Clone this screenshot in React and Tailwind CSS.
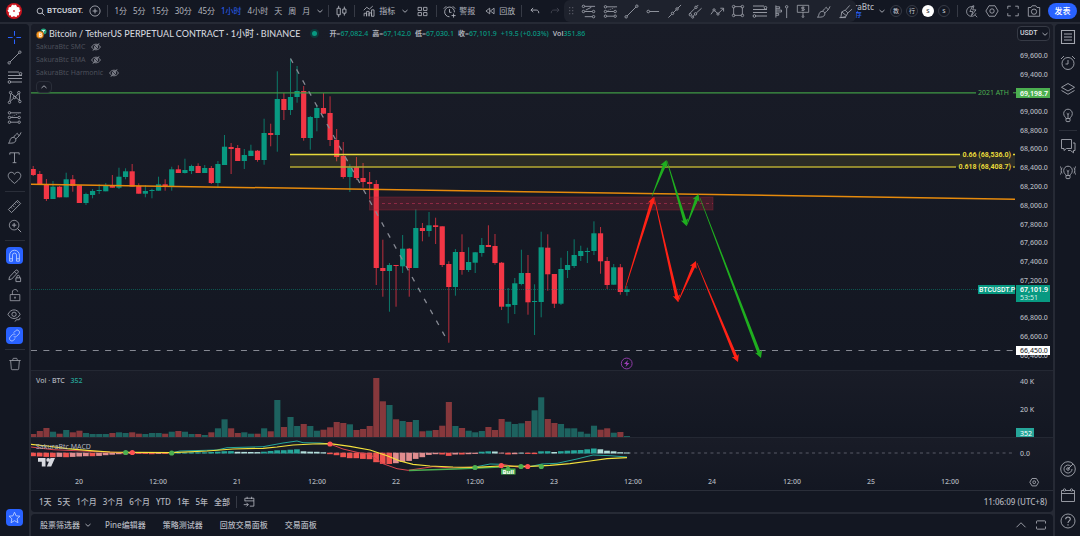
import React, { useState } from 'react';

const UP = '#089981';
const DOWN = '#f23645';

// [direction, bodyTop, bodyBottom, high, low, volume]
const CANDLES = [
  [0, 169, 175, 166, 176, 3], [0, 174, 184.3, 171, 184.3, 6], [0, 184.3, 199, 179, 201, 9], [1, 186.7, 199, 181, 199, 5.3],
  [0, 186.7, 197.3, 186, 197.3, 3.3], [1, 179.3, 197.3, 172.7, 197.3, 7], [0, 179.3, 186, 175, 191.7, 4.7], [0, 185.3, 203, 185.3, 203, 6.3],
  [1, 194, 203, 192.7, 205, 4], [1, 191, 195, 189, 198.3, 3], [1, 190, 191, 184.3, 194, 3], [1, 185.7, 191.3, 183, 191.3, 3],
  [0, 185.7, 187.7, 175, 187.7, 4], [1, 176.7, 187.7, 167.7, 189, 4.7], [1, 171.3, 177, 168.3, 179.3, 4], [0, 171.3, 186.7, 164, 186.7, 4.7],
  [0, 186, 193.7, 183.3, 193.7, 3.3], [1, 191, 193.7, 185, 197.3, 3], [1, 190, 191, 188.7, 198.3, 4], [1, 184.3, 190.7, 176.7, 190.7, 4],
  [0, 184.3, 186.7, 179.3, 190.7, 3.3], [1, 169.3, 186.7, 166.7, 190.7, 5.3], [0, 169.3, 173, 165.3, 173, 6], [1, 170, 173, 158.7, 173.5, 5.3],
  [1, 166, 171, 164.7, 174, 3], [0, 166, 173, 163.3, 173, 3], [1, 168, 173, 165, 173, 2], [0, 168, 183, 166, 184, 4.7],
  [1, 164, 183, 161, 188, 8.7], [1, 146.7, 165, 135, 165, 17.7], [0, 147, 149, 143, 174, 8.7], [0, 148, 161, 145, 161, 4],
  [1, 155, 161, 149, 169, 4.7], [1, 150.7, 156, 144.7, 156, 3.3], [0, 150.7, 160, 150, 161.7, 3.3], [1, 133, 160, 118.7, 164.7, 8.7],
  [0, 133, 135, 123.7, 146.3, 5.7], [1, 99, 135, 71.3, 151.7, 37], [0, 99, 110, 93, 120, 10], [1, 97, 110, 58.7, 115, 20],
  [1, 91, 97, 66, 102.7, 11], [0, 91, 138, 86, 140.7, 13], [1, 117, 138, 116, 149.7, 11], [1, 108, 118, 105, 131.3, 6.3],
  [0, 108, 113.7, 93, 114, 7.3], [0, 113, 140, 96.3, 146, 9.7], [0, 140, 157, 129, 161.3, 15], [0, 156, 177, 142, 178.7, 14],
  [1, 167.7, 177, 164.3, 192, 12.7], [0, 167.3, 178, 157, 180, 7], [0, 178, 182, 163, 187.7, 8], [0, 182, 184, 172, 199, 11],
  [0, 184, 268, 180, 285, 59], [0, 268, 271, 239.7, 296.7, 35.7], [1, 265, 271, 263, 311.7, 32], [0, 265, 266, 265, 306.7, 17.7],
  [1, 248.7, 266.3, 235, 273, 16], [0, 248.7, 268, 248, 296.7, 15], [1, 228, 268, 209.3, 268, 17], [0, 228, 231, 223, 241.3, 5.7],
  [1, 225.3, 231, 212, 236.7, 6.3], [0, 225.3, 227, 217.7, 244, 7], [0, 226.3, 265, 226.3, 267, 11.3], [0, 264, 287, 261.3, 342.7, 35],
  [1, 252, 287, 249, 295.7, 11], [0, 252, 270, 234.3, 274.7, 9], [1, 262, 270, 247.3, 272, 6.3], [1, 252.3, 262.7, 252, 273, 4.7],
  [1, 245, 253, 238, 256.7, 6], [0, 245, 247, 225.3, 247, 10], [0, 246, 263, 234, 264.7, 7], [0, 262.7, 306.7, 262, 310, 18],
  [1, 304, 306.7, 288, 323.3, 15.3], [1, 283.3, 305, 278, 314, 13], [1, 273, 284, 249.7, 285.3, 13.7], [0, 273, 302.3, 255, 314.7, 16],
  [1, 301, 302, 284.3, 335, 26.7], [1, 247.3, 302, 231.7, 317.3, 39.7], [0, 247.7, 274.3, 234.3, 290.7, 18], [0, 274, 303.7, 274, 308, 14],
  [1, 269, 303.7, 257.7, 305, 13], [1, 265, 270, 251, 278, 8.7], [1, 255, 266, 239.3, 268, 8.7], [1, 251, 256, 245.7, 261, 5.3],
  [1, 251, 252, 247.7, 263, 3.3], [1, 233.3, 251, 221.3, 255, 11.3], [0, 233.3, 261.3, 227, 273.7, 7.3], [0, 261, 285, 257, 289, 8.7],
  [1, 267.3, 284.7, 264, 284.7, 4.3], [0, 267.3, 292, 264, 294.7, 5], [1, 289.3, 292, 286, 295.7, 1],
];

// MACD histogram heights, positive values go up
const HIST = [
  -3, -3.3, -3.7, -4, -3.7, -4, -3.7, -3.3, -3, -3, -2.7, -2, -1.5, -1, -1, -0.7, -0.7, -0.7, -1, -0.7, -0.7, -0.3, 0.5, 0.6, 0.7,
  0.7, 0.7, 1, 1.3, 1.8, 1.9, 1.2, 1.1, 1, 0.9, 1.3, 2, 2.7, 2.8, 3.3, 3.7, 1.7, 1.3, 1.2, 0.7, -1, -2, -4, -5, -5, -5.7, -6, -9,
  -10.7, -10.8, -10, -8.7, -7.7, -5.7, -4, -1.7, -1, -1.3, -2.7, -1.3, -1.3, -1, -0.7, 1.3, 1.7, 1.5, -0.3, -1.3, -1, 0.3, -0.7,
  -0.9, 1.7, 1.8, 1, 1.8, 2.3, 2.7, 3, 3.7, 4.5, 3.7, 2.3, 1.7, 0.8, 0.5,
];

const PRICE_TICKS = [
  ['69,600.0', 55], ['69,400.0', 74], ['69,000.0', 111], ['68,800.0', 130], ['68,600.0', 148], ['68,400.0', 167], ['68,200.0', 186],
  ['68,000.0', 205], ['67,800.0', 224], ['67,600.0', 242], ['67,400.0', 261], ['67,200.0', 280], ['66,800.0', 317], ['66,600.0', 336],
  ['66,400.0', 355], ['40 K', 381], ['20 K', 409], ['0.0', 453],
];

const TIME_TICKS = [
  ['20', 79], ['12:00', 158], ['21', 237], ['12:00', 317], ['22', 396], ['12:00', 475], ['23', 554], ['12:00', 633], ['24', 712],
  ['12:00', 792], ['25', 871], ['12:00', 950],
];

const DOTS = [
  [125.7, 452.5, 1], [132.3, 452.5, 0], [171.7, 453, 1], [330, 444, 0], [475, 467.5, 1], [501.3, 465.5, 0], [521, 466.5, 1],
  [527.7, 466.5, 0], [541.3, 466.5, 1],
];

const ARROWS = [
  [625, 289, 653.5, 197, '#ff2216'], [654, 197, 678, 302, '#ff2216'], [678, 302, 696, 261, '#ff2216'], [697, 263, 738, 362, '#ff2216'],
  [652, 196, 666.5, 160, '#1fae1f'], [667, 161, 686.5, 226, '#1fae1f'], [686.5, 226, 698.5, 194, '#1fae1f'], [700, 198, 761, 358, '#1fae1f'],
];

const INTERVALS = ['1分', '5分', '15分', '30分', '45分', '1小时', '4小时', '天', '周', '月'];
const RANGES = ['1天', '5天', '1个月', '3个月', '6个月', 'YTD', '1年', '5年', '全部'];

const xAt = (i) => 33.2 + i * 6.597;

const Icon = ({ size = 16, className = '', children }) => (
  <svg width={size} height={size} viewBox="0 0 16 16" fill="none" stroke="currentColor" strokeWidth="0.9" className={`shrink-0 ${className}`}>
    {children}
  </svg>
);

const FibIcon = (p) => (
  <Icon {...p}>
    <path d="M1 3h11M1 6.5h14M1 9.5h14M4 13h11" />
    <circle cx="13.5" cy="4.7" r="1.3" fill="#131722" />
    <circle cx="2.4" cy="13" r="1.3" fill="#131722" />
  </Icon>
);
const FibToolIcon = (p) => (
  <Icon {...p}>
    <path d="M4 2.5h11M4 8h8M4 13.5h8M5 6.5l6-3" />
    <circle cx="2.6" cy="2.5" r="1.3" /><circle cx="2.6" cy="8" r="1.3" /><circle cx="13.4" cy="8" r="1.3" /><circle cx="13.4" cy="13.5" r="1.3" />
  </Icon>
);
const ForecastIcon = (p) => (
  <Icon {...p}>
    <path d="M4 3h11M4 8h7.5M4 13h7.5" /><path d="M5 7l7-3" strokeDasharray="1 1.4" />
    <circle cx="2.6" cy="3" r="1.3" /><circle cx="2.6" cy="13" r="1.3" /><circle cx="2.6" cy="8" r="1.3" /><circle cx="13" cy="8" r="1.3" /><circle cx="13" cy="13" r="1.3" />
  </Icon>
);
const TrendIcon = (p) => (
  <Icon {...p}><path d="M3.2 12.8l9.6-9.6" /><circle cx="2.3" cy="13.7" r="1.3" /><circle cx="13.7" cy="2.3" r="1.3" /></Icon>
);
const BrushIcon = (p) => (
  <Icon {...p}><path d="M1.5 14c2-.5 1-3.300 2.700-5.100 1.500-1.500 3.700-1.200 4.600-.2 1 1.200.9 3-.5 4.200C6.600 14.300 4 14 1.500 14zM7 7.800c1.300-2 2.800-3.400 4-4.300M9.300 9.500c2.700-1.800 4.700-4.200 5.700-7M11 3.500c.3 1.300 1 2 2.200 2" /></Icon>
);
const GearHex = (p) => (
  <Icon {...p}><path d="M4.600 2h6.800L15 8l-3.600 6H4.600L1 8z" /><circle cx="8" cy="8" r="2.500" /></Icon>
);
const FullIcon = (p) => (
  <Icon {...p}><path d="M2 5.500V2.500h3.500M10.500 2.500H14v3M14 10.500v3h-3.500M5.500 13.500H2v-3" /></Icon>
);
const MaximizeIcon = (p) => (
  <Icon {...p}><path d="M2 6V3.500q0-1 1-1h10q1 0 1 1V6M2 10v2.500q0 1 1 1h10q1 0 1-1V10" strokeWidth="1.100" /></Icon>
);
const Chevron = ({ up }) => (
  <Icon size={8}>{up ? <path d="M3 10l5-4.500 5 4.500" strokeWidth="1.800" /> : <path d="M3 6l5 4.500L13 6" strokeWidth="1.800" />}</Icon>
);
const BulbShape = () => (
  <path d="M6 11.500c0-1.200-2.300-2-2.300-5a4.300 4.300 0 018.600 0c0 3-2.300 3.800-2.300 5zM6 11.500v2.200c0 .6.400.9 1 .9h2c.6 0 1-.3 1-.9v-2.200M8 11V7M6.700 6.200L8 7.400l1.300-1.200" />
);
const HiddenEye = () => (
  <Icon size={10} className="text-[#9598a1]">
    <path d="M1 8c1.500-3 4-4.500 7-4.500S13.500 5 15 8c-1.500 3-4 4.500-7 4.500S2.500 11 1 8zM3 14L13 2" strokeWidth="1.300" /><circle cx="8" cy="8" r="2.500" strokeWidth="1.300" />
  </Icon>
);

const DRAW_GROUPS = [
  [
    ['十字线', <Icon size={15} className="text-[#2962ff]"><path d="M8 1v5M8 10v5M1 8h5M10 8h5" strokeWidth="1.100" /></Icon>],
    ['趋势线', <TrendIcon size={15} />],
    ['斐波那契', <FibIcon size={16} />],
    ['形态', <Icon size={15}><path d="M3 12L4 4M5 4l8 7M3.500 12L7 8.800M9 7.300L12 4M13 4l.5 7" /><circle cx="2.600" cy="13.200" r="1.300" /><circle cx="3.800" cy="2.800" r="1.300" /><circle cx="8" cy="8" r="1.300" /><circle cx="12.600" cy="2.800" r="1.300" /><circle cx="13.700" cy="12.300" r="1.300" /></Icon>],
    ['预测', <ForecastIcon size={15} />],
    ['画笔', <BrushIcon size={15} />],
    ['文字', <Icon size={15}><path d="M3 5V3h10v2M8 3v10.500M6 13.500h4" /></Icon>],
    ['图标', <Icon size={15}><path d="M8 14.300C4 11 1.300 8.800 1.300 5.900c0-2 1.500-3.500 3.300-3.500C6 2.400 7.300 3.200 8 4.700c.7-1.500 2-2.300 3.400-2.300 1.800 0 3.300 1.500 3.300 3.500 0 2.900-2.700 5.100-6.700 8.400z" /></Icon>],
  ],
  [
    ['测量', <Icon size={15}><path d="M1.500 11.200l9.700-9.700 3.300 3.300-9.700 9.700zM4 8.700l1.400 1.400M6 6.700l2 2M8 4.700l1.400 1.400M10 2.700l2 2" /></Icon>],
    ['放大', <Icon size={14}><circle cx="7" cy="7" r="5.500" /><path d="M11 11l4 4M7 4.500v5M4.500 7h5" strokeWidth="1.100" /></Icon>],
  ],
  [
    ['磁铁模式', <Icon size={13}><path d="M2 15V7.500a6 6 0 0112 0V15h-3.500V7.500a2.500 2.500 0 00-5 0V15zM2 12h3.500M10.500 12H14" strokeWidth="1.100" /></Icon>, true],
    ['保持绘图', <Icon size={15}><path d="M2 12.500l.7-3L9.500 2.300c1-1 3.300 1 2.300 2.300L5 11.800zM8 4l2.300 2.300M9.500 10.500h5v4h-5zM10.500 10.500V9.300c0-2 3-2 3 0v1.200" /></Icon>],
    ['锁定', <Icon size={14}><path d="M2.500 7.500h11v7h-11zM5 7.500V4.700C5 .8 11 .8 11 4.200" /><path d="M8 10v2" strokeWidth="1.500" /></Icon>],
    ['隐藏', <Icon size={15}><path d="M1 6.700c1.500-3 4-4.700 6.500-4.700S12.500 3.700 14 6.700c-1.500 3-4 4.500-6.500 4.500S2.500 9.700 1 6.700zM8.500 14.500l1.500-2h3l1-2" /><circle cx="7.500" cy="6.700" r="2.300" /></Icon>],
    ['同步', <Icon size={13}><path d="M7 4.500l2.300-2.300c1.300-1.300 3-1.100 4 0s1.300 2.700 0 4L10.500 9c-1 1-2.500 1-3.500.2M9 11.500l-2.300 2.300c-1.300 1.300-3 1.100-4 0s-1.300-2.700 0-4L5.500 7C6.500 6 8 6 9 6.800" strokeWidth="1.100" /></Icon>, true],
  ],
  [['删除', <Icon size={14}><path d="M1.500 4h13M5.500 4V2.500c0-.600.4-1 1-1h3c.6 0 1 .4 1 1V4M3 4l.8 9.500c0 .6.400 1 1 1h6.400c.6 0 1-.4 1-1L13 4" /></Icon>]],
];

const FAVORITES = [
  <FibToolIcon size={15} />,
  <ForecastIcon size={15} />,
  <TrendIcon size={15} />,
  <Icon size={15}><circle cx="3.500" cy="8" r="1.400" /><path d="M5 8h10" /></Icon>,
  <Icon size={15}><path d="M1.500 14.500L5 11M6.800 9.200l3-3M11.600 4.400L15 1" /><circle cx="5.900" cy="10" r="1.300" /><circle cx="10.700" cy="5.300" r="1.300" /></Icon>,
  <Icon size={15}><path d="M1.500 10.500l6-6M9.500 2.500L11 1M5.500 13l1.500-1.500M9 9.500l5.500-5" /><circle cx="8.500" cy="3.500" r="1.300" /><circle cx="2.500" cy="11.500" r="1.300" /><circle cx="8" cy="10.500" r="1.300" /><circle cx="5" cy="14" r="1.100" /></Icon>,
  <Icon size={15}><path d="M1 11l2.500-3.500M5 7l3 3M9 10l5-5M11 4.500h3.500V8" /><circle cx="4.300" cy="6.300" r="1.200" /><circle cx="8.500" cy="10.700" r="1.200" /></Icon>,
  <Icon size={14}><path d="M3 4v8M13 4v8M4 3h8M4 13h8" /><circle cx="3" cy="3" r="1.500" /><circle cx="13" cy="3" r="1.500" /><circle cx="3" cy="13" r="1.500" /><circle cx="13" cy="13" r="1.500" /></Icon>,
  <FibIcon size={16} />,
  <Icon size={15}><path d="M2 1.500v13M2 3h4v2H2M2 6.500h6v2H2M2 10h3v2H2M13.500 4.500V15" /><circle cx="13.500" cy="3" r="1.300" /></Icon>,
  <Icon size={14}><path d="M1.500 1.500h13v8h-13zM8 9.500v4M9.700 3.700H7.200c-1.300 0-1.300 1.700 0 1.700h1.600c1.300 0 1.300 1.800 0 1.800H6.300M8 2.800v5.400" /><circle cx="8" cy="14.400" r="1" /></Icon>,
  <BrushIcon size={15} />,
  <Icon size={15}><path d="M1.500 14.500h7M3 14.500l1-6 3.500-2 3 3-2.300 4zM8 6.500l4.500-5M10.500 9.500l4.500-4M4 8.500l5 4" /></Icon>,
];

const Arrow = ({ x1, y1, x2, y2, color }) => {
  const len = Math.hypot(x2 - x1, y2 - y1);
  const ux = (x2 - x1) / len;
  const uy = (y2 - y1) / len;
  const pt = (along, side) => `${(x1 + ux * along - uy * side).toFixed(2)},${(y1 + uy * along + ux * side).toFixed(2)}`;
  const neck = len - 6;
  return (
    <polygon
      fill={color}
      points={[pt(0, 0.3), pt(neck, 1.6), pt(neck - 1, 3.8), pt(len, 0), pt(neck - 1, -3.8), pt(neck, -1.6), pt(0, -0.3)].join(' ')}
    />
  );
};

const Chart = () => (
  <svg viewBox="31 24 1022 466" className="block w-full h-auto" fontFamily='"Noto Sans", "Noto Sans CJK SC", sans-serif' fontSize="7">
    <defs>
      <linearGradient id="pane" x1="0" y1="0" x2="0" y2="1">
        <stop offset="0" stopColor="#191c27" />
        <stop offset="1" stopColor="#131722" />
      </linearGradient>
      <clipPath id="plot"><rect x="31" y="24" width="984" height="466" /></clipPath>
    </defs>
    <rect x="31" y="24" width="1022" height="346" fill="url(#pane)" />
    <rect x="31" y="371" width="1022" height="66" fill="url(#pane)" />
    <rect x="31" y="438" width="1022" height="52" fill="url(#pane)" />
    <path d="M31 370.500h1022M31 437.500h1022" stroke="#242833" />

    <g clipPath="url(#plot)">
      {/* candles and volume */}
      {CANDLES.map(([up, top, bottom, high, low, vol], i) => {
        const x = xAt(i);
        return (
          <g key={i} fill={up ? UP : DOWN}>
            <rect x={x - 0.5} y={high} width="1" height={low - high} fillOpacity="0.75" />
            <rect x={x - 2.6} y={top} width="5.200" height={bottom - top} />
            <rect x={x - 3} y={437 - vol} width="6.100" height={vol} fill={up ? '#1d625f' : '#86383c'} />
          </g>
        );
      })}
      <path d="M31 289.500H978" stroke={UP} strokeWidth="0.800" strokeDasharray="1 1" opacity="0.600" />

      {/* levels and zones */}
      <path d="M31 92.800H976" stroke="#3f9a45" strokeWidth="1.300" />
      <rect x="290" y="154.500" width="725" height="12.500" fill="#ffeb3b" fillOpacity="0.090" />
      <path d="M290 154.500H960M1013 154.500h2" stroke="#e8d93a" strokeWidth="1.400" />
      <path d="M290 167H956M1013 167h2" stroke="#b5a932" strokeWidth="1.600" />
      <rect x="369.500" y="197" width="343.500" height="13" fill="#b2283c" fillOpacity="0.300" stroke="#b2283c" strokeOpacity="0.300" />
      <path d="M382 203.500H713" stroke="#a02c4c" strokeWidth="0.800" strokeDasharray="3 3" />
      <path d="M31 184.200L1015 199.200" stroke="#e68a0c" strokeWidth="1.500" />
      <path d="M290.500 58.500L448.500 342.500" stroke="#868993" strokeWidth="1.300" strokeDasharray="5 7.500" />
      <path d="M31 350.500H1015" stroke="#868993" strokeDasharray="6 6.350" />

      {ARROWS.map(([x1, y1, x2, y2, color], i) => (
        <Arrow key={i} x1={x1} y1={y1} x2={x2} y2={y2} color={color} />
      ))}

      <circle cx="626.700" cy="363.500" r="5.400" fill="none" stroke="#8e3aa5" />
      <path d="M628 360l-4 4h2.500l-1 3 4-4H627z" fill="#9c3fb5" />

      {/* MACD */}
      <path d="M31 453H1015" stroke="#434651" strokeWidth="1.300" strokeDasharray="3 3.350" />
      {HIST.map((h, i) => {
        const rising = Math.abs(h) >= Math.abs(HIST[i - 1] || 0);
        const fill = h > 0 ? (rising ? '#26a69a' : '#b2dfdb') : rising ? '#ef5350' : '#e08d8f';
        return <rect key={i} x={xAt(i) - 3} y={h > 0 ? 453 - h : 452.7} width="5.700" height={Math.abs(h) + 0.5} fill={fill} />;
      })}
      <g fill="none" strokeWidth="1">
        <path d="M31 447l22 2.700 37 1.600 33 1.400h49" stroke="#d9464f" />
        <path d="M172 452.700l8-1.700 37-1 10-2.300 36-1 20-3.700 14-2 6 1.700 17 .3 10 1" stroke="#26a69a" />
        <path d="M330 444l13 5 17 4 10 1.300 13 9.400 14 5 11 1.600 25-3.600 20 1.300 22-1" stroke="#d9464f" />
        <path d="M409 470.500l46-1.500 45-2" stroke="#4caf50" strokeWidth="1.300" />
        <path d="M475 467l15-3 12 .3" stroke="#26a69a" />
        <path d="M502 464.300l15 2.700h11" stroke="#d9464f" />
        <path d="M528 467l14-3 15-.7 20-4.300 16-4 17 .7 17 1.300" stroke="#26a69a" />
        <path d="M31 444.300l16 1.700 20 2.700 23 2 20 1.300 23 .4 39 .3 35-1.700 26-2 30-.7 14-1.300 16-2 20-1 17-.3 20 2.600 20 3.700 17 5.700 13 5.300 13 3.300 17 1.700 23 1 22 .3 25-1.300 30 .3 20-1 20-1.700 20-2.600 17-2.400 20-1" stroke="#f5e23c" strokeWidth="1.200" />
      </g>
      <path d="M508 465.500l-2.500 3h-4.500v6h14.500v-6H510.500z" fill="#4caf50" />
      <text x="508.300" y="474" fontSize="6" fontWeight="700" fill="#fff" textAnchor="middle">Bull</text>
      {DOTS.map(([x, y, up], i) => (
        <circle key={i} cx={x} cy={y} r="2.600" fill={up ? '#4caf50' : '#ff5252'} />
      ))}
    </g>

    {/* logo mark */}
    <path d="M38 458h7.500v8.500h-3.700v-4.800H38zM50.500 458h4.500l-3.800 8.500h-4.400z" fill="#d8dae0" />
    <circle cx="48.200" cy="459.900" r="1.900" fill="#d8dae0" />

    <g fill="#b2b5be" fontWeight="500">
      {PRICE_TICKS.map(([label, y]) => <text key={label} x="1020" y={y + 2.5}>{label}</text>)}
      {TIME_TICKS.map(([label, x]) => <text key={x} x={x} y="484" textAnchor="middle">{label}</text>)}
    </g>

    <text x="978" y="95" fill="#4caf50">2021 ATH</text>
    <path d="M1013 92.800h3" stroke="#4caf50" />
    <g fontWeight="700" fill="#e8d93a" textAnchor="end" fontFamily="Roboto, sans-serif">
      <text x="1011" y="157">0.66 (68,536.0)</text>
      <text x="1011" y="169">0.618 (68,408.7)</text>
    </g>

    <rect x="1016" y="88" width="34" height="10" fill="#4caf50" />
    <text x="1020" y="95.500" fontWeight="600" fill="#fff">69,198.7</text>
    <rect x="978" y="285" width="37" height="9" fill={UP} />
    <text x="979" y="292" fontWeight="500" fontFamily="Roboto, sans-serif" fill="#fff">BTCUSDT.P</text>
    <rect x="1016" y="285" width="34" height="17" fill={UP} />
    <text x="1020" y="292" fontWeight="600" fill="#fff">67,101.9</text>
    <text x="1020" y="299.500" fill="#d4ede8">53:51</text>
    <rect x="1016" y="346" width="34" height="9" fill="#fff" />
    <text x="1020" y="353" fill="#131722">66,450.0</text>
    <rect x="1016" y="428" width="18" height="9" fill="#26a69a" />
    <text x="1020" y="435.500" fill="#fff">352</text>

    <g stroke="#9598a1" fill="none">
      <path d="M1032 478.500h4.400l2.200 3.700-2.200 3.700H1032l-2.200-3.700z" />
      <circle cx="1034.200" cy="482.200" r="1.400" />
    </g>
  </svg>
);

const Sep = () => <span className="w-px h-3 bg-[#363a45] shrink-0" />;

const LegendRow = ({ name }) => (
  <div className="flex items-center h-[13px] gap-1.5 text-[7px] text-[#4c4f5a]">
    <span>{name}</span>
    <HiddenEye />
  </div>
);

const Ohlc = ({ label, value }) => (
  <span className="font-semibold text-[#b2b5be]">{label}<span className="font-medium text-[#089981]">{value}</span></span>
);

const Header = ({ interval, setInterval }) => (
  <header className="relative flex items-center justify-between h-[22px] bg-[#131722] overflow-hidden">
    <div className="flex items-center h-full">
      <svg width="16" height="16" viewBox="0 0 16 16" className="ml-1.5 mr-3.5 shrink-0">
        <circle cx="8" cy="8" r="8" fill="#c9141e" />
        {[0, 72, 144, 216, 288].map((deg) => (
          <path key={deg} d="M8 8C4 5.500 4.500 2.600 7 1.600l1 1 1-1c2.500 1 3 3.900-1 6.400z" fill="#fff" transform={`rotate(${deg} 8 8)`} />
        ))}
        <circle cx="8" cy="8" r="1.100" fill="#d9525a" />
      </svg>
      <button className="flex items-center gap-0.5 text-[8px] font-semibold text-[#d1d4dc] font-['Roboto',sans-serif]">
        <Icon size={9}><circle cx="7" cy="7" r="5" strokeWidth="1.500" /><path d="M10.500 10.500L15 15" strokeWidth="1.500" /></Icon>
        BTCUSDT.
      </button>
      <button aria-label="添加" className="mx-1.5"><Icon size={12}><circle cx="8" cy="8" r="6.800" strokeWidth="1.100" /><path d="M8 4.800v6.400M4.800 8h6.400" strokeWidth="1.200" /></Icon></button>
      <Sep />
      <nav className="flex items-center gap-1.5 ml-1.5">
        {INTERVALS.map((name) => (
          <button key={name} onClick={() => setInterval(name)} className={interval === name ? 'text-[#2962ff]' : ''}>{name}</button>
        ))}
        <button aria-label="更多周期"><Chevron /></button>
      </nav>
      <span className="w-1" />
      <Sep />
      <button aria-label="K线图" className="mx-1.5"><Icon size={13}><path d="M4.500 1v3M4.500 12v3M2.500 4h4v8h-4zM11.500 2v3M11.500 10v3M9.500 5h4v5h-4z" strokeWidth="1.100" /></Icon></button>
      <Sep />
      <button className="flex items-center gap-1 ml-2">
        <Icon size={12}><path d="M1.500 15V11h3.300v4M4.800 15V8.500h3.300V15M8.100 15v-4.500h3.300V15M11.400 15V6.500h3.300V15zM1 7l4-4 3.500 2.500L13 1.500" strokeWidth="1.100" /></Icon>
        指标
      </button>
      <button aria-label="收藏指标" className="ml-1.5"><Chevron /></button>
      <button aria-label="模板" className="mx-2"><Icon size={11}><path d="M1.500 2h5v4.500h-5zM9.500 2h5v4.500h-5zM1.500 9.500h5V14h-5zM9.500 9.500h5V14h-5z" strokeWidth="1.200" /></Icon></button>
      <Sep />
      <button className="flex items-center gap-[3px] ml-1.5">
        <Icon size={13}><path d="M8 14.500A6 6 0 1114 9M8 5v4h2.500M1 4.500L4 1.500M12 1.500l3 3M13 10.500v5M10.500 13h5" strokeWidth="1.100" /></Icon>
        警报
      </button>
      <button className="flex items-center gap-1 ml-2.5 mr-1.5">
        <Icon size={10}><path d="M7.500 3.500L1.500 8l6 4.500zM14.500 3.500L8.500 8l6 4.500z" strokeWidth="1.300" /></Icon>
        回放
      </button>
      <Sep />
      <button aria-label="撤销" className="ml-2"><Icon size={10}><path d="M5 3L1.500 6.500 5 10M1.500 6.500H10c3 0 4 2 4 5" strokeWidth="1.400" /></Icon></button>
      <button aria-label="重做" className="ml-2.5 text-[#434651]"><Icon size={10}><path d="M11 3l3.500 3.500L11 10M14.500 6.500H6c-3 0-4 2-4 5" strokeWidth="1.400" /></Icon></button>
    </div>

    <div className="flex items-center gap-[7px] pr-[3px]">
      <button className="flex items-center gap-1">
        <span className="flex flex-col items-center text-[8px] leading-[8px] font-medium">
          SakuraBtc
          <span className="text-[7px] leading-[8px] text-[#2962ff]">保存</span>
        </span>
        <Chevron />
      </button>
      <div className="flex items-center gap-1 -ml-[3px] text-[6px] leading-none">
        {['教', '行', 'S', 'S'].map((c, i) => (
          <button key={i} className={i === 2 ? 'size-3 rounded-full bg-white text-[#131722]' : 'size-3 rounded-full border border-[#363a45] text-[#d1d4dc]'}>{c}</button>
        ))}
      </div>
      <Sep />
      <button aria-label="快速搜索"><Icon size={13}><path d="M9.500 2.200a6 6 0 104 8M12.500 12.500l2.500 2.500M9.500 1L6 8h3.500L8 13l5.500-7H9.500L11 1z" /></Icon></button>
      <button aria-label="设置"><GearHex size={14} /></button>
      <button aria-label="全屏"><FullIcon size={14} /></button>
      <button aria-label="快照"><Icon size={14}><path d="M1.500 4h3l1.500-2h4l1.500 2h3v10h-13z" /><circle cx="8" cy="8.800" r="3" /></Icon></button>
      <button className="w-[29px] h-4 rounded-full bg-[#2962ff] text-white text-[8px] font-medium">发表</button>
    </div>

    {/* floating favourites bar */}
    <div className="absolute inset-y-0 right-[224px] w-[292px] flex items-center bg-[#1e222d] rounded-md text-[#a3a6af]">
      <svg width="14" height="10" viewBox="0 0 14 10" fill="#50535e">
        {[1, 4, 7].map((y) => <path key={y} d={`M5 ${y}h1.300v1.300H5zM8 ${y}h1.300v1.300H8z`} />)}
      </svg>
      {FAVORITES.map((icon, i) => (
        <button key={i} aria-label={`工具 ${i + 1}`} className="flex-1 flex justify-center">{icon}</button>
      ))}
    </div>
  </header>
);

const LeftBar = () => (
  <aside className="w-[29px] shrink-0 flex flex-col items-center bg-[#131722] rounded-tr pt-[3px] pb-2.5 text-[#a3a6af]">
    {DRAW_GROUPS.map((group, g) => (
      <React.Fragment key={g}>
        {g > 0 && <span className="w-5 h-px my-1 bg-[#2a2e39]" />}
        {group.map(([label, icon, active]) => (
          <button key={label} aria-label={label} className="w-full h-5 flex items-center justify-center">
            <span className={active ? 'size-[17px] flex items-center justify-center rounded-sm bg-[#2962ff] text-[#b9ccff]' : ''}>{icon}</span>
          </button>
        ))}
      </React.Fragment>
    ))}
    <button aria-label="收藏" className="mt-auto size-[17px] flex items-center justify-center rounded-sm bg-[#2962ff] text-[#b9ccff]">
      <Icon size={13}><path d="M8 1.500l2 4.500 4.800.4-3.600 3.200 1.100 4.800L8 11.900l-4.300 2.500 1.100-4.800L1.200 6.400 6 6z" strokeWidth="1.100" /></Icon>
    </button>
  </aside>
);

const SideButton = ({ label, children }) => (
  <button aria-label={label} className="h-[26px] w-full flex items-center justify-center"><Icon size={16}>{children}</Icon></button>
);

const RightBar = () => (
  <aside className="w-[25px] shrink-0 flex flex-col items-center bg-[#131722] rounded-tl pb-0.5 text-[#a3a6af]">
    <SideButton label="自选表"><path d="M1.500 1.500h13v13h-13zM4 5h8M4 8h8M4 11h8" strokeWidth="1.100" /></SideButton>
    <SideButton label="警报"><circle cx="8" cy="8.500" r="6" /><path d="M8 5v4H5.500M1 4l3-3M12 1l3 3" /></SideButton>
    <SideButton label="图层"><path d="M8 2.500l6.500 3.800L8 10 1.500 6.300zM1.500 9.500L8 13.300l6.500-3.800" /></SideButton>
    <SideButton label="观点"><BulbShape /></SideButton>
    <span className="w-[18px] h-px my-0.5 bg-[#2a2e39]" />
    <SideButton label="聊天"><path d="M1.500 1.500h10v9h-5l-2.500 2v-2H1.500zM13 5h2v7.500h-1.500v2.300l-3-2.300H8" /></SideButton>
    <SideButton label="直播"><BulbShape /><path d="M2 3.500c-1 2-1 4 0 6M14 3.500c1 2 1 4 0 6M.500 2.500c-1.300 2.500-1.300 5.500 0 8M15.500 2.500c1.300 2.500 1.300 5.500 0 8" /></SideButton>
    <div className="mt-auto w-full">
      <SideButton label="选股器"><circle cx="8" cy="8" r="7.300" /><path d="M10.800 5.200A4 4 0 1012 8M8 8l5-5" /><circle cx="8" cy="8" r="1.300" /></SideButton>
      <SideButton label="日历"><path d="M1.500 3.500h13v11h-13zM1.500 6.500h13" /><circle cx="4.500" cy="3" r="1.200" fill="#131722" /><circle cx="11.500" cy="3" r="1.200" fill="#131722" /></SideButton>
      <SideButton label="帮助"><circle cx="8" cy="8" r="7" /><path d="M5.700 6.300c0-3 4.600-3 4.600-.2C10.300 8 8 7.800 8 10M8 11.200v1.300" strokeWidth="1.100" /></SideButton>
    </div>
  </aside>
);

const App = () => {
  const [interval, setInterval] = useState('1小时');

  return (
    <div className="min-h-screen flex flex-col gap-0.5 bg-[#262a35] text-[8px] leading-none text-[#b2b5be] whitespace-nowrap font-['Noto_Sans','Noto_Sans_CJK_SC',sans-serif]">
      <Header interval={interval} setInterval={setInterval} />

      <div className="flex-1 flex gap-0.5">
        <LeftBar />

        <main className="flex-1 min-w-0 flex flex-col gap-0.5">
          <section className="flex-1 flex flex-col bg-[#131722] rounded overflow-hidden">
            <div className="relative">
              <Chart />

              <div className="absolute top-0.5 left-[5px]">
                <div className="flex items-center h-3.5">
                  <svg width="11" height="11" viewBox="0 0 11 11" className="mr-0.5">
                    <circle cx="7.500" cy="3.500" r="3" fill="#26a17b" />
                    <path d="M6 2.500h3M7.500 2.500v3" stroke="#fff" strokeWidth="0.800" />
                    <circle cx="4" cy="6.800" r="3.900" fill="#f7931a" stroke="#181c27" strokeWidth="0.500" />
                    <path d="M3.300 4.800v4M3.300 5h1.500c1 0 1 1.700 0 1.700H3.300h1.700c1.100 0 1.100 1.900 0 1.900H3.300" fill="none" stroke="#fff" strokeWidth="0.800" />
                  </svg>
                  <h1 className="text-[9px] font-medium text-[#d1d4dc] font-['Lato','Noto_Sans_CJK_SC',sans-serif]">Bitcoin / TetherUS PERPETUAL CONTRACT · 1小时 · BINANCE</h1>
                  <span className="mx-2.5 size-[9px] rounded-full bg-[#0c3a3a] flex items-center justify-center"><span className="size-[5px] rounded-full bg-[#089981]" /></span>
                  <div className="flex gap-1 text-[7px]">
                    <Ohlc label="开=" value="67,082.4" />
                    <Ohlc label="高=" value="67,142.0" />
                    <Ohlc label="低=" value="67,030.1" />
                    <Ohlc label="收=" value="67,101.9" />
                    <span className="font-medium text-[#089981]">+19.5 (+0.03%)</span>
                    <Ohlc label="Vol" value="351.86" />
                  </div>
                </div>
                <LegendRow name="SakuraBtc SMC" />
                <LegendRow name="SakuraBtc EMA" />
                <LegendRow name="SakuraBtc Harmonic" />
                <button aria-label="收起" className="mt-0.5 w-4 h-3 border border-[#2a2e39] rounded-sm flex items-center justify-center"><Chevron up /></button>
              </div>

              <div className="absolute top-[353px] left-[5px] text-[7px] font-medium">Vol · BTC <span className="ml-1 text-[#26a69a]">352</span></div>
              <div className="absolute top-[419px] left-[5px] text-[7px] text-[#b2b5be]">SakuraBtc MACD</div>

              <label className="absolute top-0.5 right-[3px] flex items-center">
                <select aria-label="货币" className="appearance-none w-[33px] h-[15px] pl-0.5 border border-[#363a45] rounded-sm bg-[#131722] text-[7px] text-[#d1d4dc] font-medium font-['Roboto',sans-serif]">
                  <option>USDT</option>
                </select>
                <span className="absolute right-px pointer-events-none"><Chevron /></span>
              </label>
            </div>

            <div className="flex-1 min-h-[22px] flex items-center justify-between border-t border-[#2a2e39] pl-2 pr-1.5 font-medium">
              <div className="flex items-center gap-1.5">
                {RANGES.map((name) => <button key={name}>{name}</button>)}
                <Sep />
                <button aria-label="前往日期"><Icon size={12}><path d="M2.500 7V3h12v10.500H9M2.500 6.500h12M5.500 1v3M11.500 1v3M1 11.500h6M4.500 9L7 11.500 4.500 14" strokeWidth="1.100" /></Icon></button>
              </div>
              <button>11:06:09 (UTC+8)</button>
            </div>
          </section>

          <footer className="h-[22px] flex items-center justify-between bg-[#131722] rounded-t pl-[9px] pr-1.5">
            <div className="flex items-center gap-[17px] font-medium">
              <button className="flex items-center gap-1 -mr-1">股票筛选器 <Chevron /></button>
              <button>Pine编辑器</button>
              <button>策略测试器</button>
              <button>回放交易面板</button>
              <button>交易面板</button>
            </div>
            <div className="flex items-center gap-2">
              <button aria-label="展开"><Icon size={12}><path d="M2 11l6-6 6 6" strokeWidth="1.100" /></Icon></button>
              <button aria-label="最大化"><MaximizeIcon size={12} /></button>
            </div>
          </footer>
        </main>

        <RightBar />
      </div>
    </div>
  );
};

export default App;
